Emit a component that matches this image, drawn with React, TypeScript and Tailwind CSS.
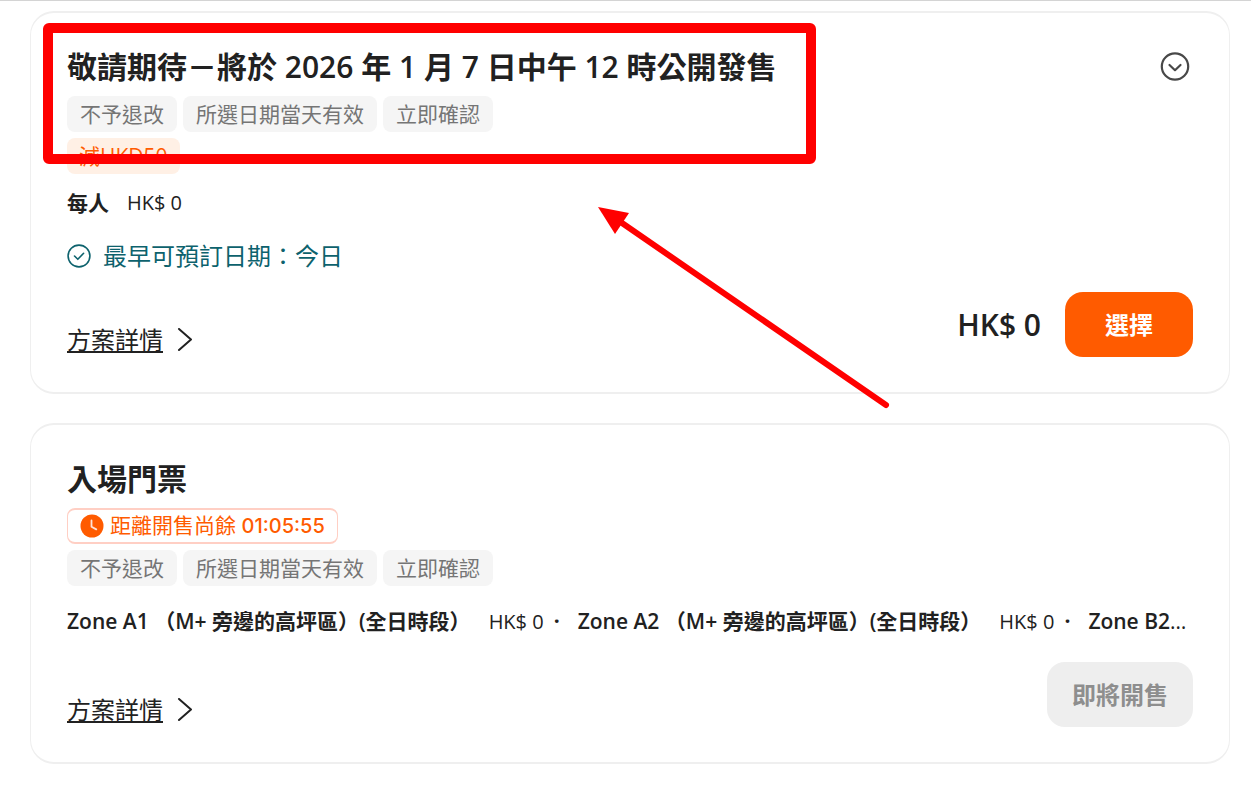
import type { ReactNode } from "react"

interface PriceItem {
  label: string
  price: string
}

interface PackageCardProps {
  title: string
  expandable?: boolean
  badges: ReactNode
  children: ReactNode
  action: ReactNode
}

const tags = ["不予退改", "所選日期當天有效", "立即確認"]

const zones: Array<PriceItem> = [
  { label: "Zone A1 （M+ 旁邊的高坪區）(全日時段）", price: "HK$ 0" },
  { label: "Zone A2 （M+ 旁邊的高坪區）(全日時段）", price: "HK$ 0" },
  { label: "Zone B2（M+ 旁邊的高坪區）", price: "HK$ 0" },
]

const ExpandIcon = () => (
  <svg
    className="w-9 h-9"
    viewBox="0 0 36 36"
    fill="none"
    stroke="currentColor"
    strokeWidth="2.2"
    strokeLinecap="round"
    strokeLinejoin="round"
    aria-hidden="true"
  >
    <circle cx="18" cy="17.5" r="13.2" />
    <path d="M12.5 16l5.5 5.2 5.5-5.2" />
  </svg>
)

const CheckIcon = () => (
  <svg
    className="w-6 h-6 shrink-0"
    viewBox="0 0 24 24"
    fill="none"
    stroke="currentColor"
    strokeWidth="1.6"
    strokeLinecap="round"
    strokeLinejoin="round"
    aria-hidden="true"
  >
    <circle cx="12" cy="12" r="10.9" />
    <path d="M7.5 12l3.3 3.3 5.8-6" />
  </svg>
)

const ClockIcon = () => (
  <svg className="w-6 h-6 shrink-0" viewBox="0 0 24 24" aria-hidden="true">
    <circle cx="12" cy="12" r="11.5" fill="#ff5b00" />
    <path
      d="M11.5 6.5v6.3l4.8 2.6"
      fill="none"
      stroke="#ffe3d6"
      strokeWidth="1.8"
      strokeLinecap="round"
      strokeLinejoin="round"
    />
  </svg>
)

const ChevronIcon = () => (
  <svg
    className="w-4 h-6"
    viewBox="0 0 16 24"
    fill="none"
    stroke="currentColor"
    strokeWidth="2"
    strokeLinecap="round"
    strokeLinejoin="round"
    aria-hidden="true"
  >
    <path d="M2 1l12 10.5L2 22" />
  </svg>
)

const TagList = () => (
  <ul className="flex flex-wrap gap-1.5">
    {tags.map((tag) => (
      <li
        key={tag}
        className="px-[13px] rounded-lg bg-[#f5f5f5] text-[21px] leading-9 text-[#757575]"
      >
        {tag}
      </li>
    ))}
  </ul>
)

const PackageCard = ({
  title,
  expandable,
  badges,
  children,
  action,
}: PackageCardProps) => {
  return (
    <article className="rounded-3xl border border-y-2 border-[#efefef] px-9 pt-8 pb-[35px]">
      <div className="flex justify-between items-center">
        <h2 className="text-[30px] leading-11 font-semibold">{title}</h2>
        {expandable && (
          <button type="button" aria-label="展開" className="text-[#484848]">
            <ExpandIcon />
          </button>
        )}
      </div>

      <div className="mt-[7px] flex flex-col items-start gap-1.5">{badges}</div>

      {children}

      <div className="flex justify-between items-end">
        <a href="#details" className="flex items-center gap-3.5 pb-px">
          <span className="text-2xl leading-8 underline underline-offset-2 decoration-2">
            方案詳情
          </span>
          <ChevronIcon />
        </a>
        {action}
      </div>
    </article>
  )
}

const Annotation = () => (
  <>
    <div className="absolute left-[43px] top-[22px] w-[773px] h-[141px] rounded-md border-10 border-[#ff0000] pointer-events-none" />
    <svg
      className="absolute left-[598px] top-[205px] w-[292px] h-[204px] pointer-events-none"
      viewBox="0 0 292 204"
      fill="#ff0000"
      aria-hidden="true"
    >
      <path d="M0 1l31 6-14 21z" />
      <path
        d="M24 17l264 182"
        stroke="#ff0000"
        strokeWidth="6"
        strokeLinecap="round"
      />
    </svg>
  </>
)

const App = () => {
  return (
    <main className="relative border-t border-[#d4d4d4] bg-white text-[#212121] font-['Open_Sans','Noto_Sans_CJK_TC',sans-serif]">
      <div className="flex flex-col gap-[29px] pt-2.5 pb-6 pl-[30px] pr-[21px]">
        <PackageCard
          title="敬請期待－將於 2026 年 1 月 7 日中午 12 時公開發售"
          expandable
          badges={
            <>
              <TagList />
              <span className="px-3 rounded-lg bg-[#fff0e5] text-[21px] leading-9 text-[#ff5b00]">
                減HKD50
              </span>
            </>
          }
          action={
            <div className="flex items-center gap-6">
              <span className="text-[30px] leading-10 font-semibold">
                HK$ 0
              </span>
              <button
                type="button"
                className="h-[65px] px-10 rounded-[18px] bg-[#ff5b00] text-2xl font-bold text-white"
              >
                選擇
              </button>
            </div>
          }
        >
          <p className="mt-3.5 flex gap-[18px] text-[21px] leading-[30px]">
            <span className="font-semibold">每人</span>
            <span className="text-xl leading-[30px]">HK$ 0</span>
          </p>
          <p className="mt-5 mb-[18px] flex items-center gap-3 text-2xl leading-9 text-[#0d626d]">
            <CheckIcon />
            最早可預訂日期：今日
          </p>
        </PackageCard>

        <PackageCard
          title="入場門票"
          badges={
            <>
              <div className="flex items-center gap-1.5 h-9 px-3 rounded-lg border border-y-2 border-[#ffcfc4] text-[21px] text-[#ff5b00]">
                <ClockIcon />
                <span>
                  距離開售尚餘{" "}
                  <time className="font-['Inter',sans-serif] text-xl font-medium">
                    01:05:55
                  </time>
                </span>
              </div>
              <TagList />
            </>
          }
          action={
            <button
              type="button"
              disabled
              className="h-[65px] px-[25px] rounded-[18px] bg-[#eeeeee] text-2xl font-bold text-[#8e8e8e]"
            >
              即將開售
            </button>
          }
        >
          <p className="mt-5 mb-[25px] truncate text-[21px] leading-[30px]">
            {zones.map((zone, index) => (
              <span key={zone.label}>
                {index > 0 && (
                  <span className="ml-2.5 mr-[18px] font-bold">·</span>
                )}
                <span className="mr-[18px] font-semibold">{zone.label}</span>
                <span className="text-xl leading-[30px]">{zone.price}</span>
              </span>
            ))}
          </p>
        </PackageCard>
      </div>

      <Annotation />
    </main>
  )
}

export default App
